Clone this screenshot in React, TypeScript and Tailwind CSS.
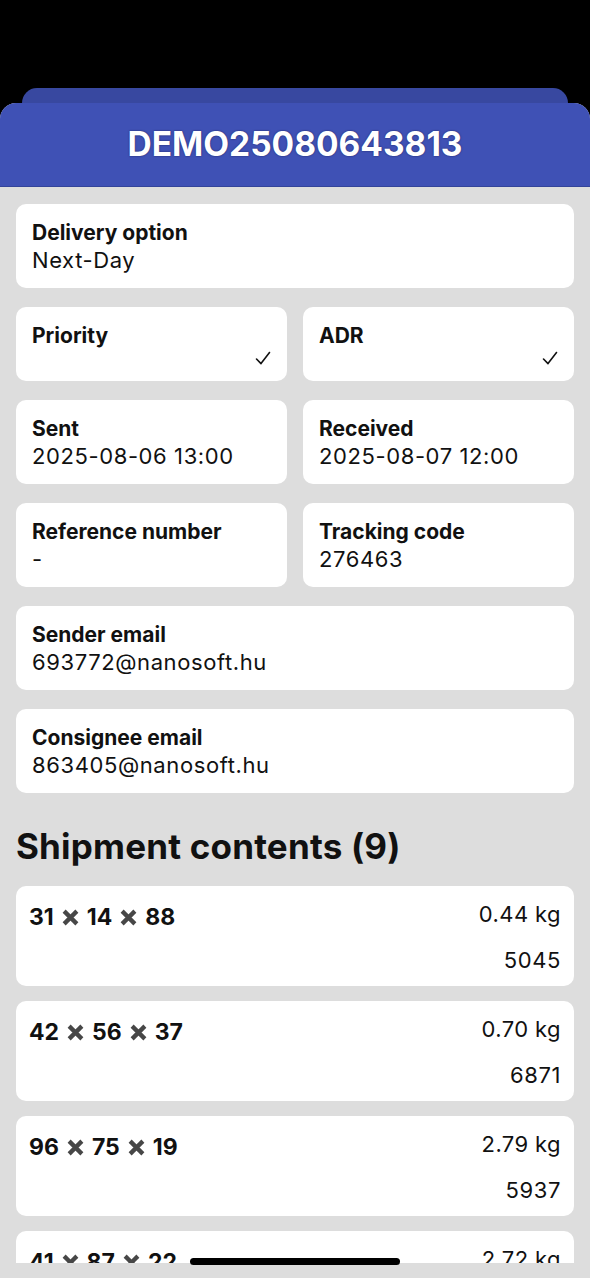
import type { ReactNode } from "react";

type Item = { dims: [number, number, number]; weight: string; code: string };

const items: Item[] = [
  { dims: [31, 14, 88], weight: "0.44 kg", code: "5045" },
  { dims: [42, 56, 37], weight: "0.70 kg", code: "6871" },
  { dims: [96, 75, 19], weight: "2.79 kg", code: "5937" },
  { dims: [41, 87, 22], weight: "2.72 kg", code: "4418" },
  { dims: [18, 63, 50], weight: "1.05 kg", code: "7320" },
  { dims: [77, 29, 44], weight: "3.12 kg", code: "2986" },
  { dims: [25, 33, 61], weight: "0.93 kg", code: "8154" },
  { dims: [58, 12, 70], weight: "1.66 kg", code: "3702" },
  { dims: [64, 48, 26], weight: "2.08 kg", code: "6649" },
];

function Check() {
  return (
    <svg width="16" height="15" viewBox="0 0 16 15" fill="none" className="block">
      <path d="M1.5 8 L6 12.6 L14.5 1.5" stroke="#111" strokeWidth="1.6" strokeLinecap="round" strokeLinejoin="round" />
    </svg>
  );
}

function Times() {
  return (
    <svg width="17" height="17" viewBox="0 0 16 16" className="mx-[8px] inline-block shrink-0">
      <path d="M2 2 L14 14 M14 2 L2 14" stroke="#474747" strokeWidth="4" />
    </svg>
  );
}

function Card({ children, className = "" }: { children: ReactNode; className?: string }) {
  return <div className={`rounded-[10px] bg-white px-4 ${className}`}>{children}</div>;
}

function Field({ label, value }: { label: string; value: string }) {
  return (
    <Card className="pt-[16px] pb-[14px]">
      <div className="text-[21px] font-bold leading-[26px] text-[#111]">{label}</div>
      <div className="text-[22px] leading-[28px] tracking-[0.6px] text-[#111]">{value}</div>
    </Card>
  );
}

function Flag({ label }: { label: string }) {
  return (
    <Card className="pt-[16px] pb-[14px]">
      <div className="text-[21px] font-bold leading-[26px] text-[#111]">{label}</div>
      <div className="flex h-[18px] items-start justify-end pt-[2px]">
        <Check />
      </div>
    </Card>
  );
}

function ContentRow({ item }: { item: Item }) {
  const [a, b, c] = item.dims;
  return (
    <div className="h-[100px] shrink-0 rounded-[10px] bg-white px-[13px] pt-[14px]">
      <div className="flex items-start justify-between">
        <div className="mt-[3px] flex items-center text-[23px] font-bold leading-[28px] text-[#111]">
          {a}
          <Times />
          {b}
          <Times />
          {c}
        </div>
        <div className="text-[22px] leading-[28px] tracking-[0.4px] text-[#111]">{item.weight}</div>
      </div>
      <div className="mt-[15px] text-right text-[22px] leading-[28px] tracking-[0.6px] text-[#111]">{item.code}</div>
    </div>
  );
}

export default function App() {
  return (
    <div className="relative flex h-[1278px] w-full flex-col overflow-hidden bg-black font-['Inter',sans-serif]">
      <div className="h-[88px] shrink-0" />
      <div className="mx-[22px] h-[15px] shrink-0 rounded-t-[16px] bg-[#3848a0]" />
      <div className="flex min-h-0 flex-1 flex-col overflow-hidden rounded-t-[16px] bg-[#dddddd]">
        <header className="flex h-[84px] shrink-0 items-center justify-center border-b border-[#33449a] bg-[#3f51b5]">
          <h1 className="text-[33.5px] font-bold leading-none text-white [text-shadow:0_0_2px_rgba(0,0,40,0.6)]">
            DEMO25080643813
          </h1>
        </header>
        <main className="flex min-h-0 flex-1 flex-col overflow-hidden px-4 pt-[17px]">
          <div className="flex flex-col gap-[19px]">
            <Field label="Delivery option" value="Next-Day" />
            <div className="grid grid-cols-2 gap-4">
              <Flag label="Priority" />
              <Flag label="ADR" />
            </div>
            <div className="grid grid-cols-2 gap-4">
              <Field label="Sent" value="2025-08-06 13:00" />
              <Field label="Received" value="2025-08-07 12:00" />
            </div>
            <div className="grid grid-cols-2 gap-4">
              <Field label="Reference number" value="-" />
              <Field label="Tracking code" value="276463" />
            </div>
            <Field label="Sender email" value="693772@nanosoft.hu" />
            <Field label="Consignee email" value="863405@nanosoft.hu" />
          </div>
          <h2 className="mt-[33px] text-[35px] font-bold leading-[40px] tracking-[0.2px] text-[#111]">
            Shipment contents ({items.length})
          </h2>
          <div className="mt-[20px] flex flex-col gap-[15px]">
            {items.map((item, i) => (
              <ContentRow key={i} item={item} />
            ))}
          </div>
        </main>
        <div className="h-[15px] shrink-0" />
      </div>
      <div className="absolute bottom-[13px] left-[190px] h-[7px] w-[210px] rounded-full bg-black" />
    </div>
  );
}
